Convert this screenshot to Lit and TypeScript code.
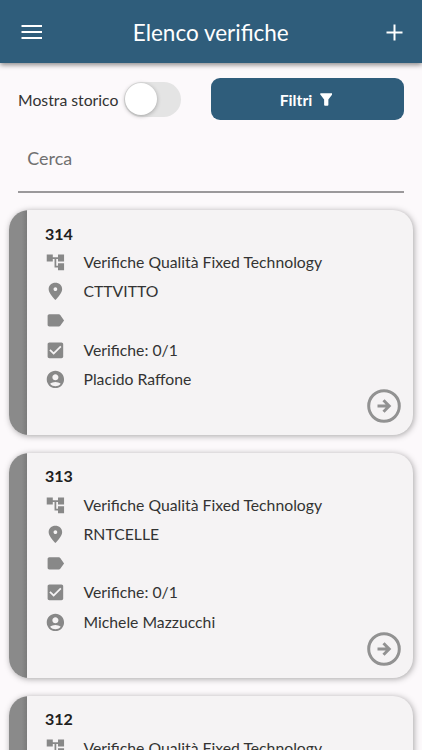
import { LitElement, html, css, svg } from "lit";
import { customElement, property } from "lit/decorators.js";

const icons = {
  tree: "M22 11V3h-7v3H9V3H2v8h7V8h2v10h4v3h7v-8h-7v3h-2V8h2v3z",
  place: "M12 2C7.6 2 4.2 5.1 4.2 9.4c0 4.9 7.8 12.6 7.8 12.6s7.8-7.7 7.8-12.6C19.8 5.1 16.4 2 12 2zm0 9.5c-1.2 0-2.1-.9-2.1-2.1s.9-2.1 2.1-2.1 2.1.9 2.1 2.1-.9 2.1-2.1 2.1z",
  label: "M17.63 5.84C17.27 5.33 16.67 5 16 5L5 5.01C3.9 5.01 3 5.9 3 7v10c0 1.1.9 1.99 2 1.99L16 19c.67 0 1.27-.33 1.63-.84L22 12l-4.37-6.16z",
  check: "M19 3H5c-1.11 0-2 .9-2 2v14c0 1.1.89 2 2 2h14c1.11 0 2-.9 2-2V5c0-1.1-.89-2-2-2zm-9 14l-5-5 1.41-1.41L10 14.17l7.59-7.59L19 8l-9 9z",
  user: "M12 2C6.48 2 2 6.48 2 12s4.48 10 10 10 10-4.48 10-10S17.52 2 12 2zm0 4c1.93 0 3.5 1.57 3.5 3.5S13.93 13 12 13s-3.5-1.57-3.5-3.5S10.07 6 12 6zm0 14c-2.03 0-4.43-.82-6.14-2.88C7.55 15.8 9.68 15 12 15s4.45.8 6.14 2.12C16.43 19.18 14.03 20 12 20z",
};

@customElement("check-card")
export class CheckCard extends LitElement {
  @property() number = "";
  @property() place = "";
  @property() user = "";

  static styles = css`
    :host {
      display: flex;
      height: 225px;
      border-radius: 20px;
      overflow: hidden;
      background: #f5f3f4;
      box-shadow: 1px 1px 6px rgba(0, 0, 0, 0.34);
      position: relative;
      flex: none;
    }
    .stripe {
      width: 18px;
      background: linear-gradient(90deg, #8a8a8a 70%, #7b7b7b);
    }
    .body {
      padding: 8.4px 0 0 18px;
    }
    .number {
      color: #202020;
      font-weight: 700;
      font-size: 16px;
      line-height: 29.2px;
    }
    .row {
      display: flex;
      align-items: center;
      height: 29.2px;
      font-size: 15.75px;
      white-space: nowrap;
    }
    .row span {
      margin-top: -1.6px;
    }
    .row svg {
      width: 20.8px;
      height: 20.8px;
      fill: #888;
      margin-right: 17.7px;
    }
    .go {
      position: absolute;
      right: 12.2px;
      bottom: 12px;
      width: 34px;
      height: 34px;
    }
  `;

  row(icon: string, text: string) {
    return html`<div class="row">
      <svg viewBox="0 0 24 24">${svg`<path d=${icon}></path>`}</svg><span>${text}</span>
    </div>`;
  }

  render() {
    return html`
      <div class="stripe"></div>
      <div class="body">
        <div class="number">${this.number}</div>
        ${this.row(icons.tree, "Verifiche Qualità Fixed Technology")}
        ${this.row(icons.place, this.place)}
        ${this.row(icons.label, "")}
        ${this.row(icons.check, "Verifiche: 0/1")}
        ${this.row(icons.user, this.user)}
      </div>
      <svg class="go" viewBox="0 0 34 34" fill="none" stroke="#929292" stroke-width="3">
        <circle cx="17" cy="17" r="15.3"></circle>
        <path d="M10.5 17H22M16.5 11.2L22.2 17L16.5 22.8"></path>
      </svg>
    `;
  }
}

@customElement("app-root")
export class AppRoot extends LitElement {
  static styles = css`
    :host {
      display: flex;
      flex-direction: column;
      height: 750px;
      overflow: hidden;
      background: #fcf9fb;
      color: #333;
      font-family: Lato, "Open Sans", sans-serif;
      font-size: 15.75px;
    }
    header {
      display: flex;
      align-items: center;
      justify-content: space-between;
      flex: none;
      box-sizing: border-box;
      height: 63px;
      padding: 1px 19px 0 21px;
      background: #2f5d7b;
      color: #fff;
      box-shadow: 0 2px 5px rgba(0, 0, 0, 0.45);
    }
    h1 {
      margin: 0 6.5px 0 0;
      font-size: 22.5px;
      font-weight: 400;
      white-space: nowrap;
    }
    .menu {
      width: 21px;
      height: 16px;
    }
    .plus {
      width: 17px;
      height: 17px;
    }
    .tools {
      display: flex;
      align-items: center;
      flex: none;
      height: 42px;
      margin: 15px 18px 0;
    }
    .caption {
      width: 106px;
      white-space: nowrap;
    }
    .switch {
      box-sizing: border-box;
      width: 57px;
      height: 35px;
      padding: 1px;
      border-radius: 18px;
      background: #e4e4e4;
    }
    .knob {
      width: 32px;
      height: 32px;
      border-radius: 50%;
      background: #fff;
      box-shadow: 0 1px 4px rgba(0, 0, 0, 0.3);
    }
    .filter {
      display: flex;
      align-items: center;
      justify-content: center;
      gap: 7.5px;
      box-sizing: border-box;
      width: 193px;
      height: 42px;
      padding-right: 3px;
      margin-left: auto;
      border-radius: 9px;
      background: #2f5d7b;
      color: #fff;
      font-weight: 700;
    }
    .filter svg {
      width: 12.5px;
      height: 13px;
      fill: #fff;
    }
    .search {
      box-sizing: border-box;
      flex: none;
      height: 73px;
      margin: 0 18px;
      padding: 25px 9.3px 0;
      border-bottom: 2px solid #9b999b;
      color: #707070;
      font-size: 17.9px;
      line-height: 26px;
    }
    .list {
      display: flex;
      flex-direction: column;
      gap: 17.7px;
      padding: 17.3px 9px 0;
    }
  `;

  render() {
    return html`
      <header>
        <svg class="menu" viewBox="0 0 21 16" stroke="#fff" stroke-width="2">
          <path d="M.5 2h20.5M.5 8h20.5M.5 14h20.5"></path>
        </svg>
        <h1>Elenco verifiche</h1>
        <svg class="plus" viewBox="0 0 17 17" stroke="#fff" stroke-width="2">
          <path d="M8.5 .5v16M.5 8.5h16"></path>
        </svg>
      </header>
      <div class="tools">
        <span class="caption">Mostra storico</span>
        <div class="switch"><div class="knob"></div></div>
        <div class="filter">
          <span>Filtri</span>
          <svg viewBox="0 0 13 13"><path d="M.9 0h11.2q1.2.2.6 1.3L8.7 6.4V12.2q-.1.8-.9.8H5.2q-.8 0-.9-.8V6.4L.3 1.3Q-.3.2.9 0z"></path></svg>
        </div>
      </div>
      <div class="search">Cerca</div>
      <div class="list">
        <check-card number="314" place="CTTVITTO" user="Placido Raffone"></check-card>
        <check-card number="313" place="RNTCELLE" user="Michele Mazzucchi"></check-card>
        <check-card number="312" place="CTTVITTO" user="Placido Raffone"></check-card>
      </div>
    `;
  }
}
